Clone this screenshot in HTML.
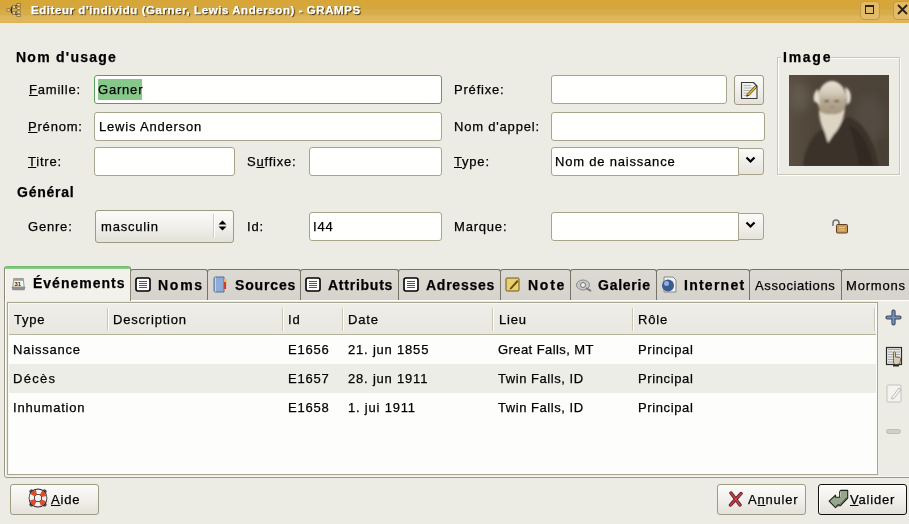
<!DOCTYPE html>
<html><head><meta charset="utf-8">
<style>
*{margin:0;padding:0;box-sizing:border-box}
html,body{width:909px;height:524px;overflow:hidden}
body{position:relative;background:#edece4;font-family:"Liberation Sans",sans-serif;color:#000}
.a{position:absolute}
.t{position:absolute;font-size:13px;line-height:13px;letter-spacing:.8px;white-space:nowrap;color:#000;will-change:transform;-webkit-text-stroke:.25px currentColor}
.b{font-weight:bold;font-size:14px;letter-spacing:.75px}
.u{text-decoration:underline;text-decoration-thickness:1px;text-underline-offset:.5px}
.ent{position:absolute;background:#fffffd;border:1px solid #a8a58c;border-radius:3px}
.foc{border-color:#5f9e58}
.cbtn{position:absolute;background:linear-gradient(#fbfbf9,#e5e3db);border:1px solid #a8a58c;border-radius:0 3px 3px 0}
.btn{position:absolute;background:linear-gradient(#fbfbf9 0%,#f1f0eb 50%,#e3e1d8 100%);border:1px solid #9e9b84;border-radius:3px}
.tab{position:absolute;top:269px;height:31px;background:linear-gradient(#dcdad2,#d5d3cb);border:1px solid #757466;border-bottom:none;border-radius:3px 3px 0 0}
</style></head><body>

<!-- title bar -->
<div class="a" style="left:0;top:0;width:909px;height:23px;background:linear-gradient(#d9a533 0px,#d6a63a 2px,#d4a73e 9px,#d7ab48 10px,#d8ad4c 15px,#dfb55a 16px,#e0b75d 21px,#dcb150 23px)"></div>
<svg class="a" style="left:6px;top:2px" width="16" height="15" viewBox="0 0 16 15">
 <g stroke="#3a2c10" stroke-width="1.1" fill="none"><path d="M3.5 8H5.5M5.5 5V11M5.5 5H7.5M5.5 11H7.5M9.5 3.5V6M9.5 10V12.5M9.5 3.5H11M9.5 6H11M9.5 10H11M9.5 12.5H11"/></g>
 <g fill="#e6d6b0" stroke="#6a5630" stroke-width=".6"><rect x="1" y="6.8" width="3" height="2.4"/><rect x="6.5" y="3.8" width="3" height="2.4"/><rect x="6.5" y="9.8" width="3" height="2.4"/><rect x="11" y="1.5" width="3.2" height="2.4"/><rect x="11" y="5" width="3.2" height="2.4"/><rect x="11" y="9" width="3.2" height="2.4"/><rect x="11" y="12.3" width="3.2" height="2.4"/></g>
</svg>
<div class="t b" style="left:31px;top:4px;font-size:11.5px;line-height:13px;letter-spacing:.57px;color:#fff;text-shadow:1px 1px 1px #3a2a08">Editeur d'individu (Garner, Lewis Anderson) - GRAMPS</div>
<div class="a" style="left:860px;top:1px;width:20px;height:19px;border:1px solid #c39a48;border-radius:4px;background:linear-gradient(#e3ba62,#e2bc6c)"></div>
<div class="a" style="left:865px;top:5px;width:9px;height:9px;border:1.5px solid #2e2410;border-top-width:2.5px"></div>
<div class="a" style="left:893px;top:1px;width:20px;height:19px;border:1px solid #c39a48;border-radius:4px;background:linear-gradient(#e3ba62,#e2bc6c)"></div>
<svg class="a" style="left:897px;top:4px" width="11" height="11" viewBox="0 0 11 11"><path d="M1 1L10 10M10 1L1 10" stroke="#2e2410" stroke-width="1.8"/></svg>

<!-- Nom d'usage section -->
<div class="t b" style="left:16px;top:51px;letter-spacing:1.25px">Nom d'usage</div>
<div class="t" style="left:29px;top:83px"><span class="u">F</span>amille:</div>
<div class="ent foc" style="left:94px;top:75px;width:348px;height:29px"></div>
<div class="a" style="left:98px;top:79px;width:44px;height:21px;background:#86c78a"></div>
<div class="t" style="left:98px;top:83px">Garner</div>
<div class="t" style="left:454px;top:83px">Préfixe:</div>
<div class="ent" style="left:551px;top:75px;width:176px;height:29px"></div>
<div class="btn" style="left:734px;top:75px;width:30px;height:30px"></div>
<svg class="a" style="left:739px;top:80px" width="21" height="21" viewBox="0 0 21 21">
 <path d="M2.5 2.5H14.5L18 6V18.5H2.5Z" fill="#efefec" stroke="#3a3a3a" stroke-width="1.1" stroke-linejoin="round"/>
 <g stroke="#b4b4b0" stroke-width="1"><path d="M4.5 5.5H12M4.5 8H14M4.5 10.5H14M4.5 13H12M4.5 15.5H10"/></g>
 <path d="M8 14.5L16.5 5.5L18 7L9.5 16Z" fill="#e8b820" stroke="#2a2a20" stroke-width=".7"/>
 <path d="M8 14.5L7.2 16.8L9.5 16Z" fill="#222"/>
</svg>

<div class="t" style="left:28px;top:120px"><span class="u">P</span>rénom:</div>
<div class="ent" style="left:94px;top:112px;width:348px;height:29px"></div>
<div class="t" style="left:99px;top:120px">Lewis Anderson</div>
<div class="t" style="left:454px;top:120px">Nom d'appel:</div>
<div class="ent" style="left:551px;top:112px;width:214px;height:29px"></div>

<div class="t" style="left:28px;top:155px"><span class="u">T</span>itre:</div>
<div class="ent" style="left:94px;top:147px;width:141px;height:29px"></div>
<div class="t" style="left:247px;top:155px">S<span class="u">u</span>ffixe:</div>
<div class="ent" style="left:309px;top:147px;width:133px;height:29px"></div>
<div class="t" style="left:454px;top:155px"><span class="u">T</span>ype:</div>
<div class="ent" style="left:551px;top:147px;width:188px;height:29px;border-radius:3px 0 0 3px"></div>
<div class="t" style="left:555px;top:155px">Nom de naissance</div>
<div class="cbtn" style="left:738px;top:148px;width:26px;height:27px"></div>
<svg class="a" style="left:745px;top:156px" width="11" height="8" viewBox="0 0 11 8"><path d="M1.5 1.5L5.5 5.5L9.5 1.5" stroke="#000" stroke-width="2.2" fill="none"/></svg>

<!-- Image frame -->
<div class="a" style="left:777px;top:57px;width:123px;height:118px;border:1px solid #c9c7b8;box-shadow:inset 1px 1px 0 #fff, 1px 1px 0 #fff"></div>
<div class="a" style="left:781px;top:50px;width:50px;height:14px;background:#edece4"></div>
<div class="t b" style="left:783px;top:51px;letter-spacing:1.75px">Image</div>
<svg class="a" style="left:789px;top:75px" width="100" height="91" viewBox="0 0 100 91">
 <defs>
  <linearGradient id="bgp" x1="0" y1="0" x2="1" y2="0"><stop offset="0" stop-color="#5a4e42"/><stop offset=".3" stop-color="#4e4438"/><stop offset="1" stop-color="#4c4338"/></linearGradient>
  <linearGradient id="hd" x1="0" y1="0" x2="0" y2="1"><stop offset="0" stop-color="#e8e2d6"/><stop offset=".3" stop-color="#d6ccba"/><stop offset=".55" stop-color="#b4a690"/><stop offset="1" stop-color="#a09078"/></linearGradient>
  <filter id="bl" x="-20%" y="-20%" width="140%" height="140%"><feGaussianBlur stdDeviation="1"/></filter>
  <filter id="bl2" x="-50%" y="-50%" width="200%" height="200%"><feGaussianBlur stdDeviation="4"/></filter>
 </defs>
 <rect width="100" height="91" fill="url(#bgp)"/>
 <ellipse cx="10" cy="22" rx="10" ry="14" fill="#625a4e" filter="url(#bl2)"/>
 <ellipse cx="80" cy="45" rx="14" ry="24" fill="#544c42" filter="url(#bl2)"/>
 <g filter="url(#bl)">
  <path d="M14 91C15 78 20 66 28 58L36 52L60 42C74 48 84 62 90 91Z" fill="#3a3129"/>
  <path d="M60 50C72 56 80 70 84 91H70C68 74 64 62 60 50Z" fill="#322a23"/>
  <path d="M88 66L100 62V91H92Z" fill="#4a4034"/>
  <path d="M35 55L39 68L47 56Z" fill="#dcd4c4"/>
  <ellipse cx="43" cy="25" rx="14.5" ry="19" fill="url(#hd)"/>
  <path d="M25 26C24 20 26 16 29 14C30 20 30 26 31 30Z" fill="#e4ddd0"/>
  <path d="M56 12C61 14 63 20 61 27L58 30C58 24 57 18 56 12Z" fill="#e8e2d6"/>
  <path d="M30 35C30 45 33 53 36 57C39 60 44 60 47 57C51 51 55 44 56 34C51 39 46 40 43 39C38 40 33 39 30 35Z" fill="#ddd4c4"/>
  <path d="M35.5 26H40M45.5 26H50" stroke="#5a4e3e" stroke-width="1.8"/>
  <path d="M41 32H46" stroke="#8a7e6a" stroke-width="1.2"/>
 </g>
</svg>

<!-- Général -->
<div class="t b" style="left:17px;top:186px">Général</div>
<div class="t" style="left:28px;top:220px">Genre:</div>
<div class="btn" style="left:95px;top:210px;width:139px;height:33px"></div>
<div class="a" style="left:213px;top:214px;width:2px;height:24px;border-left:1px solid #cfcdc0;border-right:1px solid #fff"></div>
<div class="t" style="left:101px;top:220px">masculin</div>
<svg class="a" style="left:217px;top:219px" width="11" height="13" viewBox="0 0 11 13"><path d="M1.5 5.5L5.5 1.5L9.5 5.5Z M1.5 7.5L5.5 11.5L9.5 7.5Z" fill="#000"/></svg>
<div class="t" style="left:247px;top:220px">Id:</div>
<div class="ent" style="left:309px;top:212px;width:133px;height:29px"></div>
<div class="t" style="left:313px;top:220px">I44</div>
<div class="t" style="left:454px;top:220px">Marque:</div>
<div class="ent" style="left:551px;top:212px;width:188px;height:29px;border-radius:3px 0 0 3px"></div>
<div class="cbtn" style="left:738px;top:213px;width:26px;height:27px"></div>
<svg class="a" style="left:745px;top:221px" width="11" height="8" viewBox="0 0 11 8"><path d="M1.5 1.5L5.5 5.5L9.5 1.5" stroke="#000" stroke-width="2.2" fill="none"/></svg>
<svg class="a" style="left:830px;top:218px" width="19" height="16" viewBox="0 0 19 16">
 <path d="M3 8V5A3 3 0 0 1 9 5V6" stroke="#707070" stroke-width="1.5" fill="none"/>
 <rect x="6.5" y="6.5" width="11" height="8.5" rx="1" fill="#c99a5a" stroke="#5a4020"/>
 <path d="M9 9.5H15M9 12H15" stroke="#e8c890" stroke-width="1"/>
</svg>

<!-- NOTEBOOK -->
<div class="a" style="left:4px;top:299px;width:920px;height:179px;border:1px solid #9a9884;border-radius:0 0 0 3px;box-shadow:inset 1px 1px 0 #fff, inset 0 -1px 0 #f7f6f0"></div>
<!-- inactive tabs -->
<div class="tab" style="left:130px;width:78px"></div>
<div class="tab" style="left:207px;width:94px"></div>
<div class="tab" style="left:300px;width:99px"></div>
<div class="tab" style="left:398px;width:103px"></div>
<div class="tab" style="left:500px;width:71px"></div>
<div class="tab" style="left:570px;width:87px"></div>
<div class="tab" style="left:656px;width:94px"></div>
<div class="tab" style="left:749px;width:93px"></div>
<div class="tab" style="left:841px;width:80px"></div>
<!-- active tab -->
<div class="a" style="left:4px;top:266px;width:127px;height:35px;background:#f2f1ec;border-left:1px solid #8a8874;border-right:1px solid #8a8874;border-radius:3px 3px 0 0;box-shadow:inset 1px 0 0 #fff"></div>
<div class="a" style="left:5px;top:266px;width:125px;height:3px;background:linear-gradient(#6cb86a,#8ed08e);border-radius:2px 2px 0 0"></div>

<!-- tab icons -->
<svg class="a" style="left:11px;top:277px" width="15" height="14" viewBox="0 0 15 14">
 <path d="M2.8 1.5H12.2L13.2 10H1.8Z" fill="#f6f6f4" stroke="#8c8c8c" stroke-width=".9"/>
 <rect x="2.6" y="1.2" width="9.8" height="2.6" fill="#a0a0a0"/>
 <path d="M0.5 10H14.5L13.5 13.2H1.5Z" fill="#8e8e8e"/>
 <text x="3.6" y="9.2" font-size="5.8" font-family="Liberation Sans" font-weight="bold" fill="#1a1a1a">31</text>
</svg>
<div class="t b" style="left:33px;top:277px;letter-spacing:1px">Événements</div>

<svg class="a" style="left:135px;top:277px" width="16" height="15" viewBox="0 0 16 15"><rect x="1" y="1" width="14" height="13" rx="2" fill="#fff" stroke="#000" stroke-width="1.6"/><path d="M4 4.5H12M4 6.5H12M4 8.5H12M4 10.5H12" stroke="#555" stroke-width="1"/></svg>
<div class="t b" style="left:158px;top:279px;letter-spacing:1.75px">Noms</div>

<svg class="a" style="left:212px;top:276px" width="16" height="17" viewBox="0 0 16 17"><path d="M2 2.5Q2 1 3.5 1H12V16H3.5Q2 16 2 14.5Z" fill="#90acd6" stroke="#50709c"/><path d="M3.5 1.5V15.5" stroke="#c4d4ec" stroke-width="1"/><path d="M13 4V13" stroke="#d83828" stroke-width="2.2"/><path d="M13 3V6" stroke="#f0c028" stroke-width="2.2"/></svg>
<div class="t b" style="left:235px;top:279px;letter-spacing:.85px">Sources</div>

<svg class="a" style="left:305px;top:277px" width="16" height="15" viewBox="0 0 16 15"><rect x="1" y="1" width="14" height="13" rx="2" fill="#fff" stroke="#000" stroke-width="1.6"/><path d="M4 4.5H12M4 6.5H12M4 8.5H12M4 10.5H12" stroke="#555" stroke-width="1"/></svg>
<div class="t b" style="left:328px;top:279px">Attributs</div>

<svg class="a" style="left:403px;top:277px" width="16" height="15" viewBox="0 0 16 15"><rect x="1" y="1" width="14" height="13" rx="2" fill="#fff" stroke="#000" stroke-width="1.6"/><path d="M4 4.5H12M4 6.5H12M4 8.5H12M4 10.5H12" stroke="#555" stroke-width="1"/></svg>
<div class="t b" style="left:426px;top:279px">Adresses</div>

<svg class="a" style="left:505px;top:277px" width="16" height="15" viewBox="0 0 16 15"><rect x="1" y="1" width="13" height="13" rx="1" fill="#e8d070" stroke="#6a5a20"/><path d="M5 11L12 3L13.5 4.5L6.5 12L4.5 12.5Z" fill="#6a4a10"/></svg>
<div class="t b" style="left:528px;top:279px;letter-spacing:1.75px">Note</div>

<svg class="a" style="left:576px;top:278px" width="16" height="14" viewBox="0 0 16 14"><ellipse cx="7" cy="7" rx="6.5" ry="5" fill="#c8c8c8" stroke="#8a8a8a"/><circle cx="7" cy="7" r="2.5" fill="#eee" stroke="#777"/><path d="M10 10L15 13" stroke="#777" stroke-width="2"/></svg>
<div class="t b" style="left:598px;top:279px">Galerie</div>

<svg class="a" style="left:661px;top:276px" width="16" height="17" viewBox="0 0 16 17"><path d="M3 1H12L15 4V16H3Z" fill="#f0f0f0" stroke="#888"/><circle cx="7" cy="9.5" r="6" fill="#3a5a90"/><circle cx="5.5" cy="7.5" r="2.5" fill="#90b0e0"/></svg>
<div class="t b" style="left:684px;top:279px;letter-spacing:1.25px">Internet</div>

<div class="t" style="left:755px;top:279px;letter-spacing:.62px">Associations</div>
<div class="t" style="left:846px;top:279px">Mormons</div>

<!-- scrolled window -->
<div class="a" style="left:7px;top:302px;width:871px;height:173px;background:#fdfdfb;border:1px solid #a8a690;box-shadow:inset 1px 1px 0 #f8f7f2"></div>
<div class="a" style="left:9px;top:304px;width:867px;height:31px;background:linear-gradient(#eeede7,#e8e7e0);border-bottom:1px solid #b5b39c"></div>
<div class="a" style="left:9px;top:364px;width:867px;height:29px;background:#edede8"></div>
<!-- header separators -->
<div class="a" style="left:107px;top:308px;width:2px;height:23px;border-left:1px solid #c9c7b4;border-right:1px solid #fff"></div>
<div class="a" style="left:282px;top:308px;width:2px;height:23px;border-left:1px solid #c9c7b4;border-right:1px solid #fff"></div>
<div class="a" style="left:342px;top:308px;width:2px;height:23px;border-left:1px solid #c9c7b4;border-right:1px solid #fff"></div>
<div class="a" style="left:492px;top:308px;width:2px;height:23px;border-left:1px solid #c9c7b4;border-right:1px solid #fff"></div>
<div class="a" style="left:632px;top:308px;width:2px;height:23px;border-left:1px solid #c9c7b4;border-right:1px solid #fff"></div>
<div class="a" style="left:874px;top:308px;width:2px;height:23px;border-left:1px solid #c9c7b4;border-right:1px solid #fff"></div>
<div class="t" style="left:14px;top:313px">Type</div>
<div class="t" style="left:113px;top:313px">Description</div>
<div class="t" style="left:288px;top:313px">Id</div>
<div class="t" style="left:348px;top:313px">Date</div>
<div class="t" style="left:499px;top:313px">Lieu</div>
<div class="t" style="left:638px;top:313px">Rôle</div>

<div class="t" style="left:13px;top:343px">Naissance</div>
<div class="t" style="left:288px;top:343px">E1656</div>
<div class="t" style="left:348px;top:343px">21. jun 1855</div>
<div class="t" style="left:498px;top:343px;letter-spacing:.42px">Great Falls, MT</div>
<div class="t" style="left:638px;top:343px;letter-spacing:.62px">Principal</div>

<div class="t" style="left:13px;top:372px;letter-spacing:1.3px">Décès</div>
<div class="t" style="left:288px;top:372px">E1657</div>
<div class="t" style="left:348px;top:372px">28. jun 1911</div>
<div class="t" style="left:498px;top:372px;letter-spacing:.55px">Twin Falls, ID</div>
<div class="t" style="left:638px;top:372px;letter-spacing:.62px">Principal</div>

<div class="t" style="left:13px;top:401px">Inhumation</div>
<div class="t" style="left:288px;top:401px">E1658</div>
<div class="t" style="left:348px;top:401px">1. jui 1911</div>
<div class="t" style="left:498px;top:401px;letter-spacing:.55px">Twin Falls, ID</div>
<div class="t" style="left:638px;top:401px;letter-spacing:.62px">Principal</div>

<!-- side buttons -->
<svg class="a" style="left:885px;top:309px" width="17" height="17" viewBox="0 0 17 17"><path d="M8.5 2.5V14.5M2.5 8.5H14.5" stroke="#3a4658" stroke-width="4.2" stroke-linecap="round"/><path d="M8.5 2.5V14.5M2.5 8.5H14.5" stroke="#7690b8" stroke-width="2.2" stroke-linecap="round"/></svg>
<svg class="a" style="left:885px;top:346px" width="18" height="21" viewBox="0 0 18 21"><rect x="1.5" y="1.5" width="15" height="17" fill="#e8e8e6" stroke="#2a2a2a" stroke-width="1.2"/><path d="M3 3.5H15M3 6H15M3 8.5H15M3 11H15M3 13.5H15M3 16H15" stroke="#a8a8a6" stroke-width="1.2"/><path d="M8.5 17V6.5Q9.5 5 10.5 6.5V11L14.5 11.5Q16 12 15.5 14L14.8 17.5Q13 19 10 18.5Z" fill="#d8ccb4" stroke="#5a5040" stroke-width=".8"/><rect x="8" y="18.5" width="6" height="2" fill="#2a2a2a"/></svg>
<svg class="a" style="left:886px;top:384px" width="17" height="19" viewBox="0 0 17 19"><rect x="1" y="1" width="14" height="17" rx="1" fill="#f4f3ef" stroke="#c4c3bd"/><path d="M6 13L13 4L15 5.5L8 14.5L5.5 15Z" fill="none" stroke="#bdbcb6"/></svg>
<div class="a" style="left:886px;top:429px;width:15px;height:5px;border-radius:3px;background:#cfcec8;border:1px solid #bebdb6"></div>

<!-- bottom buttons -->
<div class="btn" style="left:10px;top:484px;width:89px;height:31px"></div>
<svg class="a" style="left:28px;top:488px" width="20" height="20" viewBox="0 0 20 20">
 <g fill="#555" stroke="#222" stroke-width=".6"><circle cx="3.5" cy="3.5" r="1.8"/><circle cx="16.5" cy="3.5" r="1.8"/><circle cx="3.5" cy="16.5" r="1.8"/><circle cx="16.5" cy="16.5" r="1.8"/></g>
 <circle cx="10" cy="10" r="6.3" fill="none" stroke="#1e1e1e" stroke-width="6.2"/>
 <circle cx="10" cy="10" r="6.3" fill="none" stroke="#f2f2f2" stroke-width="4.6"/>
 <circle cx="10" cy="10" r="6.3" fill="none" stroke="#e04a28" stroke-width="4.6" stroke-dasharray="4.9 5" stroke-dashoffset="-2.5"/>
</svg>
<div class="t" style="left:51px;top:493px"><span class="u">A</span>ide</div>

<div class="btn" style="left:717px;top:484px;width:89px;height:31px"></div>
<svg class="a" style="left:728px;top:491px" width="16" height="16" viewBox="0 0 16 16">
 <g stroke-linecap="round" fill="none"><path d="M3 2C6 6 9 10 12 14M13 2.5C10 6 6 10 2.5 14" stroke="#5a1c24" stroke-width="3.4"/><path d="M3 2C6 6 9 10 12 14M13 2.5C10 6 6 10 2.5 14" stroke="#c8404e" stroke-width="1.8"/></g>
</svg>
<div class="t" style="left:748px;top:493px">A<span class="u">n</span>nuler</div>

<div class="btn" style="left:818px;top:484px;width:89px;height:31px;border:1px solid #101010;box-shadow:inset 1px 1px 0 #fff"></div>
<svg class="a" style="left:828px;top:489px" width="21" height="20" viewBox="0 0 21 20">
 <path d="M1.1 12.2L7.5 6.2V8.2H11.7V2.5L12.7 1.4H19.7V9L12.5 16.7H9.7L7.5 18.7Z" fill="#96a68c" stroke="#1e221a" stroke-width="1.1" stroke-linejoin="round"/>
 <path d="M8 17L9.7 15.5H12L18.8 8.5" stroke="#4a5244" stroke-width="1" fill="none"/>
 <path d="M12.5 2.5V8" stroke="#c4d0bc" stroke-width=".8" fill="none"/>
</svg>
<div class="t" style="left:850px;top:493px"><span class="u">V</span>alider</div>

</body></html>
